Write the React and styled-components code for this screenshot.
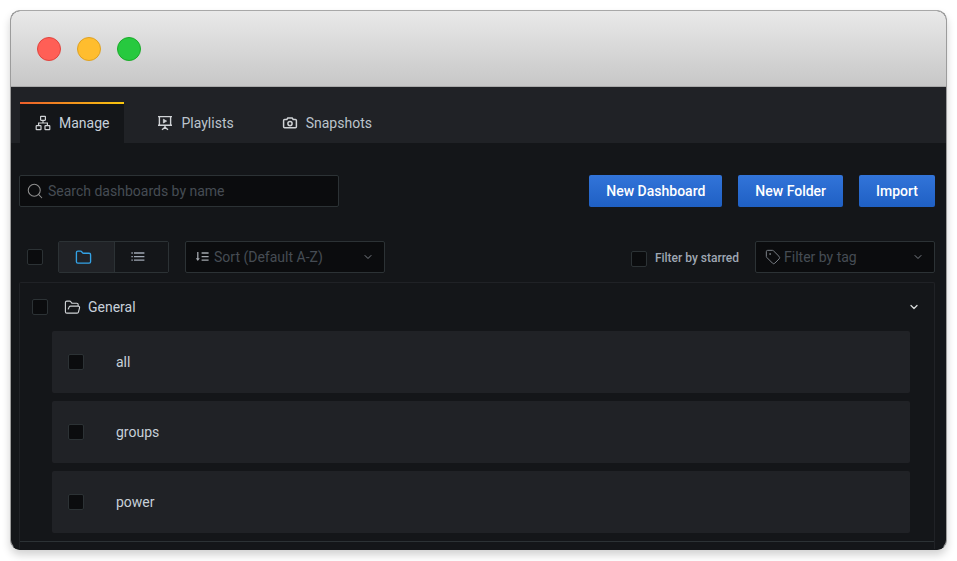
import React from 'react'
import styled, { createGlobalStyle } from 'styled-components'
import { ChevronDown, Folder, FolderOpen, Search, Tag } from 'lucide-react'

const GlobalStyle = createGlobalStyle`
    html, body {
        margin: 0;
        background: #fff;
    }
    * {
        box-sizing: border-box;
    }
`

const Page = styled.div`
    padding: 10px 10px 0 10px;
    width: 957px;
    height: 561px;
    overflow: hidden;
    font-family: Roboto, "Liberation Sans", sans-serif;
    font-size: 14px;
`

const Window = styled.div`
    width: 937px;
    height: 540px;
    border: 1px solid #9c9c9c;
    border-top-color: #a8a8a8;
    border-bottom-color: #141619;
    border-radius: 10px;
    overflow: hidden;
    display: flex;
    flex-direction: column;
    background: #141619;
    box-shadow: 0 5px 9px rgba(0, 0, 0, 0.18);
`

const TitleBar = styled.div`
    height: 76px;
    flex: none;
    display: flex;
    align-items: center;
    gap: 16px;
    padding-left: 26px;
    background: linear-gradient(#e9e9e9, #c7c7c7);
    border-bottom: 1px solid #a9a9a9;
`

const Light = styled.span`
    width: 24px;
    height: 24px;
    border-radius: 50%;
    background: ${p => p.$color};
    border: 1px solid ${p => p.$edge};
`

const TabBar = styled.div`
    height: 56px;
    flex: none;
    display: flex;
    align-items: flex-end;
    padding-left: 9px;
    background: #202226;
`

const Tab = styled.div`
    height: 41px;
    display: flex;
    align-items: center;
    gap: 8px;
    padding: 0 15px 2px 15px;
    margin-right: ${p => p.$gap || 0}px;
    color: ${p => (p.$active ? '#c7d0d9' : '#bcc4cc')};
    background: ${p => (p.$active ? '#141619' : 'transparent')};
    border-top: 2px solid transparent;
    border-image: ${p => (p.$active ? 'linear-gradient(90deg, #eb5d2b, #f9c80e) 1' : 'none')};
    border-bottom: 0;
    border-left: 0;
    border-right: 0;
    svg {
        color: #d0d3d6;
        flex: none;
    }
`

const Content = styled.div`
    flex: 1;
    min-height: 0;
    display: flex;
    flex-direction: column;
    padding: 32px 11px 0 8px;
`

const ActionRow = styled.div`
    display: flex;
    align-items: center;
    height: 32px;
    gap: 16px;
`

const SearchBox = styled.div`
    width: 320px;
    height: 32px;
    margin-right: auto;
    display: flex;
    align-items: center;
    gap: 4px;
    padding-left: 6px;
    background: #0b0c0e;
    border: 1px solid #2c3235;
    border-radius: 2px;
    color: #464c54;
    svg {
        color: #8e8e8e;
        flex: none;
    }
`

const PrimaryButton = styled.div`
    height: 32px;
    padding: 0 ${p => p.$pad || 16}px;
    display: flex;
    align-items: center;
    color: #fff;
    font-weight: 500;
    background: linear-gradient(#3274d9, #1f60c4);
    border-radius: 2px;
`

const FilterRow = styled.div`
    margin-top: 34px;
    height: 32px;
    display: flex;
    align-items: center;
    padding-left: 8px;
`

const Check = styled.span`
    display: block;
    flex: none;
    width: 16px;
    height: 16px;
    background: #0b0c0e;
    border: 1px solid #2c3235;
    border-radius: 2px;
    margin-top: ${p => p.$top || 0}px;
`

const Toggle = styled.div`
    display: flex;
    height: 32px;
    margin-left: 15px;
    border: 1px solid #2c3235;
    border-radius: 2px;
`

const ToggleItem = styled.div`
    width: ${p => p.$width}px;
    display: flex;
    align-items: center;
    justify-content: center;
    padding-right: 7px;
    background: ${p => (p.$active ? '#202226' : '#141619')};
    border-left: ${p => (p.$divider ? '1px solid #2c3235' : '0')};
    color: ${p => (p.$active ? '#33a2e5' : '#9fa7b3')};
`

const Select = styled.div`
    width: ${p => p.$width}px;
    height: 32px;
    margin-left: 16px;
    display: flex;
    align-items: center;
    gap: ${p => p.$gap}px;
    padding: 0 10px 0 9px;
    background: #0b0c0e;
    border: 1px solid #2c3235;
    border-radius: 2px;
    color: #464c54;
    svg {
        flex: none;
        color: #7b8087;
    }
`

const SelectLabel = styled.span`
    flex: 1;
`

const StarredLabel = styled.span`
    margin-left: 8px;
    color: #9fa7b3;
    font-size: 12px;
    font-weight: 500;
    line-height: 20px;
    margin-top: 1px;
`

const Spacer = styled.div`
    flex: 1;
`

const Panel = styled.div`
    flex: 1;
    margin-top: 9px;
    min-height: 0;
    display: flex;
    flex-direction: column;
    border: 1px solid #202226;
    border-bottom: 0;
    border-radius: 2px 2px 0 0;
    padding: 0 24px 8px 12px;
`

const SectionHeader = styled.div`
    height: 48px;
    flex: none;
    display: flex;
    align-items: center;
    color: #c7d0d9;
    svg {
        flex: none;
    }
`

const SectionName = styled.span`
    margin-left: 7px;
`

const SectionIcon = styled.span`
    display: flex;
    margin-left: 16px;
    color: #d0d3d6;
`

const SectionToggle = styled.span`
    display: flex;
    margin-left: auto;
    margin-right: -10px;
    color: #d8d9da;
`

const Rows = styled.div`
    display: flex;
    flex-direction: column;
    gap: 8px;
    padding-left: 20px;
`

const Row = styled.div`
    height: 62px;
    display: flex;
    align-items: center;
    padding-left: 16px;
    background: #202226;
    border-radius: 2px;
    color: #c7d0d9;
`

const RowTitle = styled.span`
    margin-left: 32px;
`

const PanelEnd = styled.div`
    height: 1px;
    margin-top: 8px;
    flex: none;
    background: #2c3235;
    margin-left: -12px;
    margin-right: -24px;
`

const SitemapIcon = () => (
    <svg width="16" height="16" viewBox="0 0 16 16" fill="none" stroke="currentColor" strokeWidth="1.2">
        <rect x="5.6" y="1.3" width="4.8" height="4" rx="0.5" />
        <rect x="1.2" y="10.7" width="4.8" height="4" rx="0.5" />
        <rect x="10" y="10.7" width="4.8" height="4" rx="0.5" />
        <path d="M8 5.3V8M3.6 10.7V8h8.8v2.7" />
    </svg>
)

const PlaylistIcon = () => (
    <svg width="16" height="16" viewBox="0 0 16 16" fill="none" stroke="currentColor" strokeWidth="1.4">
        <path d="M1 1.6h14M2.4 1.6v8.6h11.2V1.6M1 10.2h14M8 10.2v2M8 12.2l-3 2.6M8 12.2l3 2.6" />
        <path d="M6.4 4.2v3.8l3.2-1.9z" fill="currentColor" strokeWidth="0.8" />
    </svg>
)

const CameraIcon = () => (
    <svg width="16" height="16" viewBox="0 0 16 16" fill="none" stroke="currentColor" strokeWidth="1.5">
        <path d="M2.6 4.6h2.2l1-1.7h4.4l1 1.7h2.2c.6 0 1 .4 1 1v6.2c0 .6-.4 1-1 1H2.6c-.6 0-1-.4-1-1V5.6c0-.6.4-1 1-1z" strokeLinejoin="round" />
        <circle cx="8" cy="8.6" r="2.1" />
    </svg>
)

const ListIcon = () => (
    <svg width="16" height="16" viewBox="0 0 16 16" fill="none" stroke="currentColor" strokeWidth="1.3">
        <path d="M4 4h10.4M4 7.6h10.4M4 11.2h10.4" />
        <path d="M1.4 4h1.4M1.4 7.6h1.4M1.4 11.2h1.4" />
    </svg>
)

const SortIcon = () => (
    <svg width="14" height="14" viewBox="0 0 14 14" fill="none" stroke="currentColor" strokeWidth="1.3" style={{ color: '#a3a7ad' }}>
        <path d="M2.8 2v7.6" />
        <path d="M0.8 8.2L2.8 11l2-2.8z" fill="currentColor" stroke="none" />
        <path d="M6.6 3h7M6.6 6.6h7M6.6 10.2h7" />
    </svg>
)

const dashboards = ['all', 'groups', 'power']

const App = () => {
    return (
        <Page>
            <GlobalStyle />
            <Window>
                <TitleBar>
                    <Light $color="#ff5f56" $edge="#e0443e" />
                    <Light $color="#ffbd2e" $edge="#dea123" />
                    <Light $color="#27c93f" $edge="#1aab29" />
                </TitleBar>
                <TabBar>
                    <Tab $active $gap={18}>
                        <SitemapIcon />
                        Manage
                    </Tab>
                    <Tab $gap={18}>
                        <PlaylistIcon />
                        Playlists
                    </Tab>
                    <Tab>
                        <CameraIcon />
                        Snapshots
                    </Tab>
                </TabBar>
                <Content>
                    <ActionRow>
                        <SearchBox>
                            <Search size={18} strokeWidth={1.4} />
                            Search dashboards by name
                        </SearchBox>
                        <PrimaryButton $pad={17}>New Dashboard</PrimaryButton>
                        <PrimaryButton $pad={17}>New Folder</PrimaryButton>
                        <PrimaryButton $pad={17}>Import</PrimaryButton>
                    </ActionRow>
                    <FilterRow>
                        <Check />
                        <Toggle>
                            <ToggleItem $active $width={55}>
                                <Folder size={17} strokeWidth={1.9} />
                            </ToggleItem>
                            <ToggleItem $divider $width={54}>
                                <ListIcon />
                            </ToggleItem>
                        </Toggle>
                        <Select $width={200} $gap={5}>
                            <SortIcon />
                            <SelectLabel>Sort (Default A-Z)</SelectLabel>
                            <ChevronDown size={12} strokeWidth={2} />
                        </Select>
                        <Spacer />
                        <Check $top={4} />
                        <StarredLabel>Filter by starred</StarredLabel>
                        <Select $width={180} $gap={3}>
                            <Tag size={16} strokeWidth={1.5} />
                            <SelectLabel>Filter by tag</SelectLabel>
                            <ChevronDown size={12} strokeWidth={2} />
                        </Select>
                    </FilterRow>
                    <Panel>
                        <SectionHeader>
                            <Check />
                            <SectionIcon>
                                <FolderOpen size={17} strokeWidth={1.6} />
                            </SectionIcon>
                            <SectionName>General</SectionName>
                            <SectionToggle>
                                <ChevronDown size={12} strokeWidth={2.6} />
                            </SectionToggle>
                        </SectionHeader>
                        <Rows>
                            {dashboards.map(name => (
                                <Row key={name}>
                                    <Check />
                                    <RowTitle>{name}</RowTitle>
                                </Row>
                            ))}
                        </Rows>
                        <PanelEnd />
                    </Panel>
                </Content>
            </Window>
        </Page>
    )
}

export default App
